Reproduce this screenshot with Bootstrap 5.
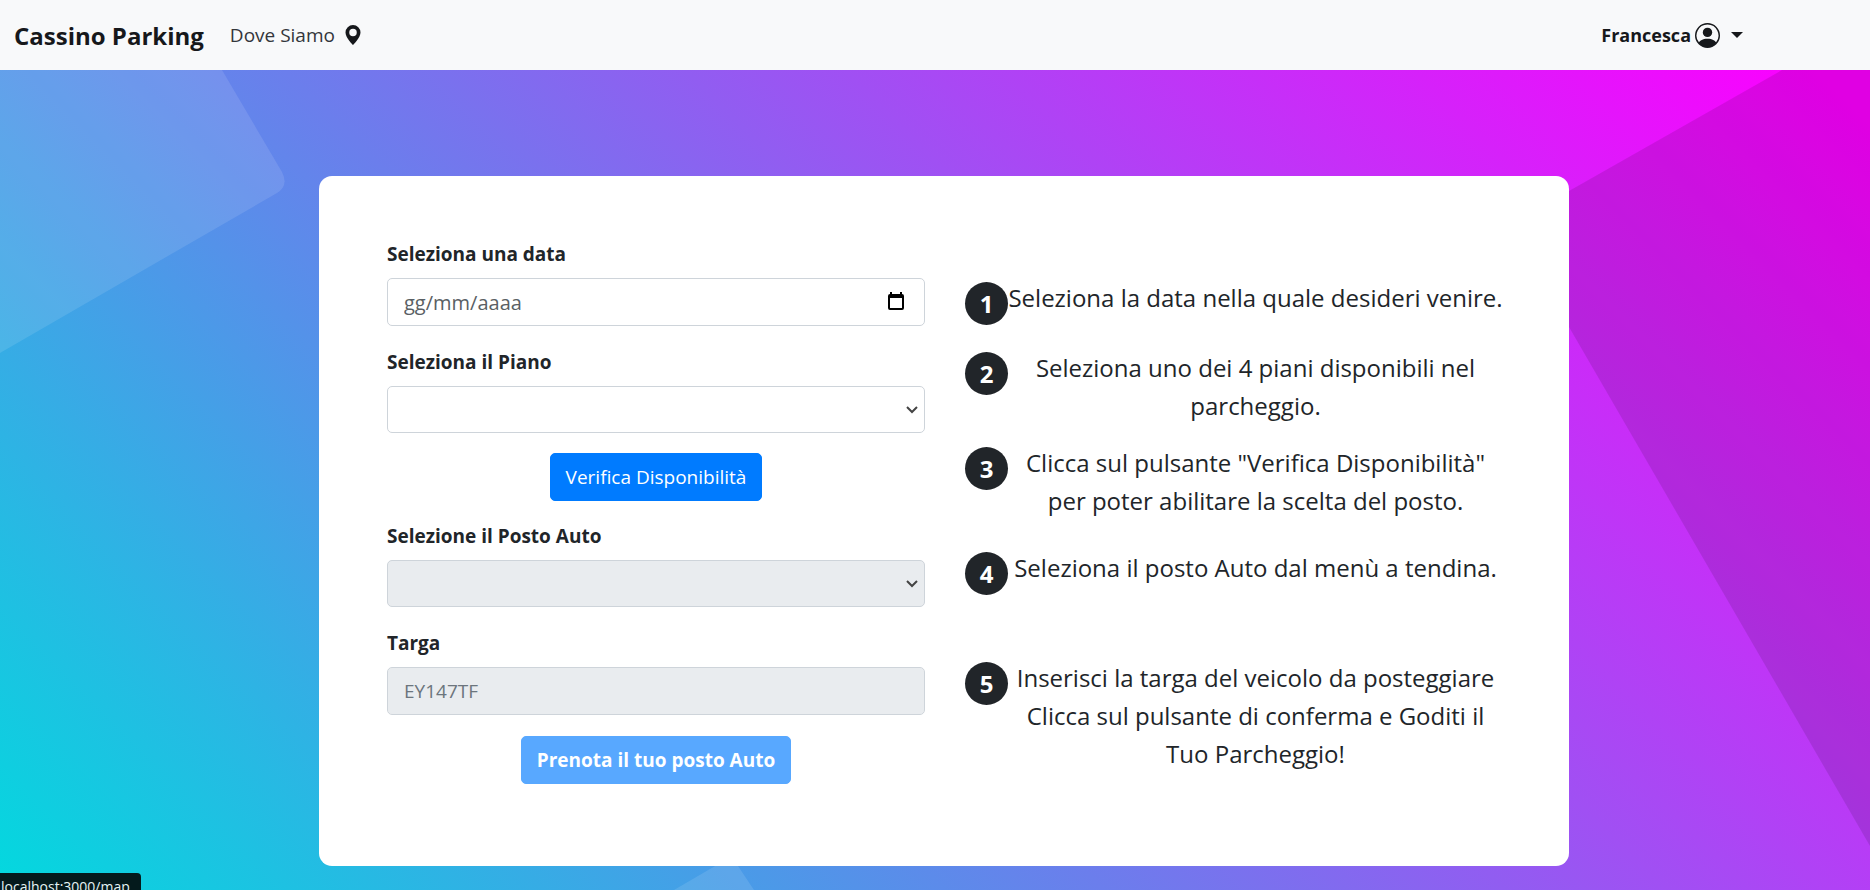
<!DOCTYPE html>
<html lang="it">
<head>
<meta charset="utf-8">
<meta name="viewport" content="width=device-width, initial-scale=1">
<title>Cassino Parking</title>
<link rel="stylesheet" href="https://cdn.jsdelivr.net/npm/bootstrap@5.3.0/dist/css/bootstrap.min.css">
<style>
  body { font-family: "Open Sans", "Noto Sans", sans-serif; font-size: 19px; line-height: 30px; color: #212529; }
  .topbar { min-height: 70px; padding: 0 127px 0 14px; background: #f8f9fa; }
  .topbar .navbar-brand { font-size: 24px; font-weight: 700; margin-right: 26px; padding: 2px 0 0; color: #16181b; }
  .topbar .nav-link { font-size: 19px; padding: 0; color: #33363a; }
  .topbar .user-link { font-size: 18px; font-weight: 700; color: #16181b; }
  .topbar .user-link::after { margin-left: 11px; border-width: 6px; border-bottom: 0; }
  .stage { min-height: calc(100vh - 70px); padding: 106px 0 24px 18px; background: linear-gradient(45deg, #00dbde -1%, #fc00ff 98%); }
  .shapes { inset: 0; width: 100%; height: 100%; }
  .booking { max-width: 1250px; padding: 63px 66px 82px 68px; border-radius: 13px; background: #fff; }
  .booking .row { --bs-gutter-x: 40px; }
  .form-label { font-size: 19px; font-weight: 700; margin-bottom: 9px; display: block; }
  .field { margin-bottom: 21px; }
  .booking .form-control, .booking .form-select { font-size: 19px; height: 48px; padding: 0 16px; border: 1px solid #ced4da; border-radius: 5px; color: #495057; }
  .booking .date-input { font-size: 20px; }
  .booking .form-select { height: 47px; background-position: right 6px center; background-size: 12px 8px;
    background-image: url("data:image/svg+xml,%3Csvg xmlns='http://www.w3.org/2000/svg' viewBox='0 0 12 8'%3E%3Cpath d='M1 1l5 5 5-5' fill='none' stroke='%23444' stroke-width='2'/%3E%3C/svg%3E"); }
  .booking .form-control:disabled, .booking .form-select:disabled { background-color: #e9ecef; opacity: 1; }
  .booking .form-control::placeholder { color: #6c757d; }
  .booking .date-input::placeholder { color: #5a5f64; }
  .date-button { right: 20px; top: 14px; width: 18px; height: 18px; padding: 0; border: 0; background: none; line-height: 0; }
  .btn-main { --bs-btn-bg: #007bff; --bs-btn-border-color: #007bff; --bs-btn-color: #fff; --bs-btn-disabled-bg: #007bff; --bs-btn-disabled-border-color: #007bff; --bs-btn-disabled-color: #fff;
    font-size: 19px; height: 48px; padding: 1px 15px 0; border-radius: 5px; }
  .action { margin: -1px 0 20px; }
  .steps { margin: 40px 0 0; padding: 0; grid-template-rows: 70px 95px 105px 110px auto; font-size: 24px; line-height: 38px; }
  .step-no { width: 43px; height: 43px; margin-top: 3px; background: #212529; font-weight: 700; }
  .status-tip { width: 141px; height: 17px; padding: 4px 0 0 1px; font-size: 14px; line-height: 20px; background: #041a1c; color: #e4f4f4; border-top-right-radius: 4px; }
</style>
</head>
<body>
<nav class="topbar navbar navbar-expand d-flex justify-content-between">
  <div class="d-flex align-items-center">
    <a class="navbar-brand" href="#">Cassino Parking</a>
    <a class="nav-link d-flex align-items-center" href="#map">Dove Siamo
      <svg class="ms-2" width="20" height="20" viewBox="0 0 16 16" fill="#16181b" aria-hidden="true"><path d="M8 16s6-5.686 6-10A6 6 0 0 0 2 6c0 4.314 6 10 6 10zm0-7a3 3 0 1 1 0-6 3 3 0 0 1 0 6z"/></svg>
    </a>
  </div>
  <a class="nav-link user-link dropdown-toggle d-flex align-items-center" href="#" role="button" data-bs-toggle="dropdown" aria-expanded="false">Francesca
    <svg class="ms-1" width="25" height="25" viewBox="0 0 16 16" fill="currentColor" aria-hidden="true"><path d="M11 6a3 3 0 1 1-6 0 3 3 0 0 1 6 0z"/><path fill-rule="evenodd" d="M0 8a8 8 0 1 1 16 0A8 8 0 0 1 0 8zm8-7a7 7 0 0 0-5.468 11.370C3.242 11.226 4.805 10 8 10s4.757 1.225 5.468 2.370A7 7 0 0 0 8 1z"/></svg>
  </a>
</nav>

<main class="stage position-relative">
  <svg class="shapes position-absolute" viewBox="0 0 1870 820" preserveAspectRatio="none" aria-hidden="true">
    <path d="M0 0H222L282 102Q289 116 277 123L0 283Z" fill="#fff" fill-opacity=".11"/>
    <path d="M1870 0H1782L1569 121V257L1870 776Z" fill="#000" fill-opacity=".11"/>
    <path d="M674 820L722 792Q732 787 738 796L754 820Z" fill="#fff" fill-opacity=".11"/>
  </svg>
  <section class="booking position-relative mx-auto">
    <div class="row">
      <form class="col-6">
        <div class="field">
          <label class="form-label" for="data">Seleziona una data</label>
          <div class="position-relative">
            <input class="form-control date-input" id="data" type="text" placeholder="gg/mm/aaaa">
            <button class="date-button position-absolute" type="button" aria-label="Apri calendario">
              <svg width="18" height="18" viewBox="0 0 18 18"><path d="M3 0h2v2h8V0h2v2q2 0 2 2v12q0 2-2 2H3q-2 0-2-2V4q0-2 2-2zM3 6v10h12V6z" fill="#000" fill-rule="evenodd"/></svg>
            </button>
          </div>
        </div>
        <div class="field">
          <label class="form-label" for="piano">Seleziona il Piano</label>
          <select class="form-select" id="piano"><option></option></select>
        </div>
        <div class="action text-center"><button class="btn btn-main align-top" type="button">Verifica Disponibilità</button></div>
        <div class="field">
          <label class="form-label" for="posto">Selezione il Posto Auto</label>
          <select class="form-select" id="posto" disabled><option></option></select>
        </div>
        <div class="field">
          <label class="form-label" for="targa">Targa</label>
          <input class="form-control" id="targa" type="text" placeholder="EY147TF" disabled>
        </div>
        <div class="text-center"><button class="btn btn-main align-top fw-bold" type="submit" disabled>Prenota il tuo posto Auto</button></div>
      </form>
      <div class="col-6">
        <ol class="steps d-grid list-unstyled">
          <li class="d-flex align-items-start"><span class="step-no rounded-circle text-white d-flex flex-shrink-0 align-items-center justify-content-center">1</span><span class="flex-fill text-center text-nowrap">Seleziona la data nella quale desideri venire.</span></li>
          <li class="d-flex align-items-start"><span class="step-no rounded-circle text-white d-flex flex-shrink-0 align-items-center justify-content-center">2</span><span class="flex-fill text-center">Seleziona uno dei 4 piani disponibili nel parcheggio.</span></li>
          <li class="d-flex align-items-start"><span class="step-no rounded-circle text-white d-flex flex-shrink-0 align-items-center justify-content-center">3</span><span class="flex-fill text-center">Clicca sul pulsante "Verifica Disponibilità" per poter abilitare la scelta del posto.</span></li>
          <li class="d-flex align-items-start"><span class="step-no rounded-circle text-white d-flex flex-shrink-0 align-items-center justify-content-center">4</span><span class="flex-fill text-center">Seleziona il posto Auto dal menù a tendina.</span></li>
          <li class="d-flex align-items-start"><span class="step-no rounded-circle text-white d-flex flex-shrink-0 align-items-center justify-content-center">5</span><span class="flex-fill text-center">Inserisci la targa del veicolo da posteggiare<br>Clicca sul pulsante di conferma e Goditi il Tuo Parcheggio!</span></li>
        </ol>
      </div>
    </div>
  </section>
</main>
<div class="status-tip position-fixed bottom-0 start-0 overflow-hidden text-nowrap">localhost:3000/map</div>
<script src="https://cdn.jsdelivr.net/npm/bootstrap@5.3.0/dist/js/bootstrap.bundle.min.js"></script>
</body>
</html>
